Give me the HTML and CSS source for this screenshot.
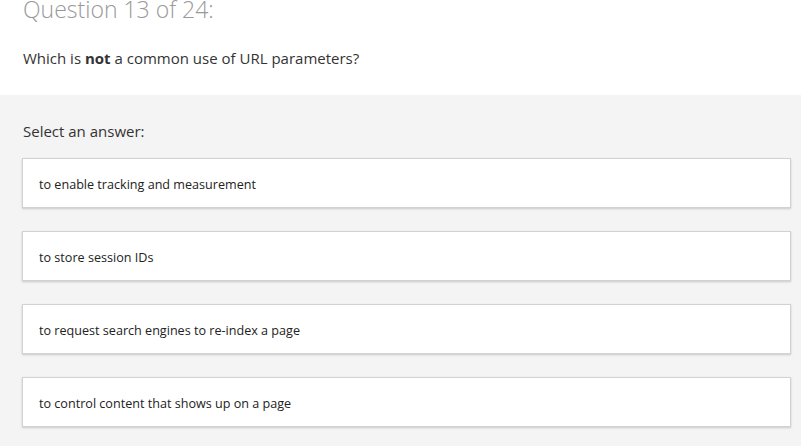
FILE: index.html
```html
<!DOCTYPE html>
<html lang="en">
<head>
  <meta charset="UTF-8">
  <title>Quiz</title>
  <link rel="stylesheet" href="styles.css">
</head>
<body>

  <div class="header">
    <h2 class="counter">Question 13 of 24:</h2>
    <p class="question">Which is <strong>not</strong> a common use of URL parameters?</p>
  </div>

  <div class="answers">
    <p class="prompt">Select an answer:</p>
    <div class="options">
      <div class="option">to enable tracking and measurement</div>
      <div class="option">to store session IDs</div>
      <div class="option">to request search engines to re-index a page</div>
      <div class="option">to control content that shows up on a page</div>
    </div>
  </div>

</body>
</html>
```

FILE: styles.css
```css
* {
  box-sizing: border-box;
}
html, body {
  height: 100%;
}
body {
  margin: 0;
  font-family: 'Open Sans', 'Noto Sans', sans-serif;
  background: #f4f4f4;
  color: #333;
  display: flex;
  flex-direction: column;
}
.header {
  background: #fff;
  height: 95px;
  padding: 0 23px;
}
.counter {
  margin: 0;
  font-size: 23px;
  font-weight: 300;
  line-height: 18px;
  color: #999;
}
.question {
  margin: 30px 0 0;
  font-size: 15px;
  line-height: 20px;
  color: #333;
}
.question strong {
  font-weight: 700;
}
.answers {
  flex: 1;
  padding: 26px 10px 0 22px;
}
.prompt {
  margin: 0 0 17px 1px;
  font-size: 15px;
  line-height: 20px;
  color: #333;
}
.options {
  display: flex;
  flex-direction: column;
  gap: 23px;
}
.option {
  height: 50px;
  background: #fff;
  border: 1px solid #d2d2d2;
  box-shadow: 0 1px 2px rgba(0,0,0,0.18);
  padding: 17px 16px 0;
  font-size: 12.6px;
  line-height: 18px;
  color: #222;
}
```
